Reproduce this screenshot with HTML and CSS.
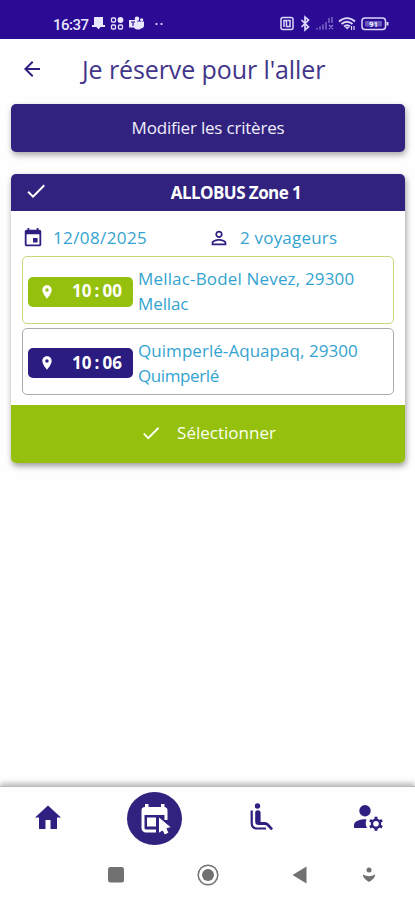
FILE: index.html
```html
<!DOCTYPE html>
<html lang="fr">
<head>
<meta charset="utf-8">
<meta name="viewport" content="width=device-width, initial-scale=1">
<title>Je réserve pour l'aller</title>
<link rel="stylesheet" href="styles.css">
</head>
<body>
<div class="status">
  <span class="clock">16:37</span>
  <svg class="st-left" width="76" height="18" viewBox="0 0 76 18">
    <path d="M4 2h9v8h2v2h-4.500l-2 2.500-2-2.500H2v-2h2z"/>
    <g fill="none" stroke="#e4e0ff" stroke-width="1.300"><rect x="21.500" y="3" width="4" height="4" rx="1"/><rect x="21.500" y="10" width="4" height="4" rx="1"/><rect x="28.500" y="10" width="4" height="4" rx="1"/></g>
    <circle cx="30.500" cy="5" r="2.900"/>
    <circle cx="47" cy="3.800" r="2.300"/><circle cx="51.700" cy="4.800" r="1.600"/>
    <path d="M39 5h8v1.500h7v4c0 2-1.500 3-3 3-1 1.500-6 1.500-7-1H39z"/>
    <path d="M41 7h4M43 7v4" stroke="#2b0b93" stroke-width="1.100"/>
    <circle cx="66.500" cy="9" r="1.100"/><circle cx="71.500" cy="9" r="1.100"/>
  </svg>
  <svg class="st-right" width="112" height="18" viewBox="0 0 112 18">
    <g fill="none" stroke="#dcd8fa" stroke-width="1.500">
    <rect x="2" y="2.500" width="12" height="12" rx="2"/>
    <path d="M5 12V5.500h2.500v6H11V5.500H8.500"/>
    <path d="m22.500 5 7 7-3.500 3V2l3.500 3-7 7" stroke-width="1.700"/>
    <path d="M38 14.500v-1.500M41 14.500v-3M44 14.500v-5M47 14.500V7M50 8V3m3 5V2m-3 8 4 4m0-4-4 4" stroke="#8a7bd0" stroke-width="1.300"/>
    <path d="M60 6.500c5-4.500 11-4.500 16 0M62.500 9c3.500-3 7.500-3 11 0M65 11.500c2-1.700 4-1.700 6 0" stroke-width="1.900"/>
    <path d="m66 12 2.200 2.500 2.200-2.500z" fill="#dcd8fa" stroke="none"/><path d="M72.500 11v4m2.500-4v4" stroke-width="1.200"/>
    <rect x="83" y="3" width="23.500" height="11.500" rx="3"/>
    <path d="M108.500 7v3.500" stroke-width="2"/>
    <rect x="86" y="6" width="17" height="5.500" rx="1" fill="#6a5cc0" stroke="none"/>
    </g>
    <text x="94.500" y="12" text-anchor="middle" class="battery">91</text>
  </svg>
</div>
<header class="top">
  <svg class="back" width="24" height="24" viewBox="0 0 24 24"><path d="M20 11H7.830l5.590-5.590L12 4l-8 8 8 8 1.410-1.410L7.830 13H20v-2z"/></svg>
  <h1>Je réserve pour l'aller</h1>
</header>
<main>
  <button class="criteria"><span>Modifier les critères</span></button>
  <section class="card">
    <div class="card-head">
      <svg width="24" height="24" viewBox="0 0 24 24"><path d="M9 16.170L4.830 12l-1.420 1.410L9 19 21 7l-1.410-1.410z"/></svg>
      <h2>ALLOBUS Zone 1</h2>
    </div>
    <div class="card-body">
      <div class="meta">
        <div class="meta-item">
          <svg width="22" height="22" viewBox="0 0 24 24"><path d="M17 12h-5v5h5v-5zM16 1v2H8V1H6v2H5c-1.110 0-1.990.9-1.990 2L3 19c0 1.100.890 2 2 2h14c1.100 0 2-.9 2-2V5c0-1.100-.9-2-2-2h-1V1h-2zm3 18H5V8h14v11z"/></svg>
          <span class="date">12/08/2025</span>
        </div>
        <div class="meta-item">
          <svg width="22" height="22" viewBox="0 0 24 24"><path d="M12 5.900c1.160 0 2.100.940 2.100 2.100s-.940 2.100-2.100 2.100S9.900 9.160 9.900 8s.940-2.100 2.100-2.100m0 9c2.970 0 6.100 1.460 6.100 2.100v1.100H5.900V17c0-.640 3.130-2.100 6.100-2.100M12 4C9.790 4 8 5.790 8 8s1.790 4 4 4 4-1.790 4-4-1.790-4-4-4zm0 9c-2.670 0-8 1.340-8 4v3h16v-3c0-2.660-5.330-4-8-4z"/></svg>
          <span class="people">2 voyageurs</span>
        </div>
      </div>
      <div class="stop from">
        <div class="chip">
          <svg width="16" height="16" viewBox="0 0 24 24"><path d="M12 2C8.130 2 5 5.130 5 9c0 5.250 7 13 7 13s7-7.750 7-13c0-3.870-3.130-7-7-7zm0 9.500c-1.380 0-2.500-1.120-2.500-2.500s1.120-2.500 2.500-2.500 2.500 1.120 2.500 2.500-1.120 2.500-2.500 2.500z"/></svg>
          <span class="time">10<i>:</i>00</span>
        </div>
        <p><span class="l1">Mellac-Bodel Nevez, 29300</span><br><span class="l2">Mellac</span></p>
      </div>
      <div class="stop to">
        <div class="chip">
          <svg width="16" height="16" viewBox="0 0 24 24"><path d="M12 2C8.130 2 5 5.130 5 9c0 5.250 7 13 7 13s7-7.750 7-13c0-3.870-3.130-7-7-7zm0 9.500c-1.380 0-2.500-1.120-2.500-2.500s1.120-2.500 2.500-2.500 2.500 1.120 2.500 2.500-1.120 2.500-2.500 2.500z"/></svg>
          <span class="time">10<i>:</i>06</span>
        </div>
        <p><span class="l1">Quimperlé-Aquapaq, 29300</span><br><span class="l2">Quimperlé</span></p>
      </div>
    </div>
    <button class="select">
      <svg width="22" height="22" viewBox="0 0 24 24"><path d="M9 16.170L4.830 12l-1.420 1.410L9 19 21 7l-1.410-1.410z"/></svg>
      <span>Sélectionner</span>
    </button>
  </section>
</main>
<nav class="tabs">
  <a class="tab"><svg width="32" height="32" viewBox="0 0 32 32"><path d="M16 4.500 29 16.500h-4V28h-6.500v-9h-5v9H7V16.500H3z"/></svg></a>
  <a class="tab"><span class="bubble"><svg width="36" height="36" viewBox="0 0 36 36">
    <path fill="none" stroke="#fff" stroke-width="3" stroke-linejoin="round" d="M19 30H9a3 3 0 0 1-3-3V9.500a2 2 0 0 1 2-2h19a2 2 0 0 1 2 2V19"/>
    <path fill="#fff" d="M8 3h3.500v4.500H24V3h3.500v4.500H30V14H5V7.500h3zM10 16.500h9v9h-9z"/>
    <path fill="#fff" stroke="#30227e" stroke-width="1" d="M21.500 15.500v17l4-2.500 2 4 4.500-2-2-4.500 4.500-1z"/>
  </svg></span></a>
  <a class="tab"><svg width="32" height="32" viewBox="0 0 32 32">
    <circle cx="12.500" cy="5" r="2.700"/>
    <path d="M10.200 12a2.700 2.700 0 0 1 5.400 0v9H20q2 0 3.500 1.500l4.500 5-1.800 1.700-4.700-4.700q-.5-.5-1.500-.5h-6.300q-3.500 0-3.500-3.500z"/>
    <path fill="none" stroke="#2e1f80" stroke-width="2.200" d="M6.700 9.500V22q0 5.500 5.500 5.500H21"/>
  </svg></a>
  <a class="tab"><svg width="32" height="32" viewBox="0 0 32 32">
    <circle cx="13" cy="9.800" r="5.700"/>
    <path d="M2 27v-3c0-3.800 5.500-5.800 12.500-5.800q-1.800 4.400.5 8.800z"/>
    <circle cx="24" cy="22.800" r="4" fill="none" stroke="#2e1f80" stroke-width="2.400"/>
    <path fill="none" stroke="#2e1f80" stroke-width="3" d="M24 18.800v-3m0 11v3M20.500 20.800l-2.600-1.500m9.600 5.500 2.600 1.500M20.500 24.800l-2.600 1.500m9.600-5.500 2.600-1.500"/>
  </svg></a>
</nav>
<footer class="sysnav">
  <svg width="24" height="24" viewBox="0 0 24 24"><rect x="4" y="4" width="16" height="15.500" rx="2.500"/></svg>
  <svg width="24" height="24" viewBox="0 0 24 24"><circle cx="12" cy="12" r="9.800" fill="none" stroke="#717171" stroke-width="1.500"/><circle cx="12" cy="12" r="6"/></svg>
  <svg width="24" height="24" viewBox="0 0 24 24"><path d="M18.500 3.500v17L4.500 12z"/></svg>
  <svg width="24" height="24" viewBox="0 0 24 24"><circle cx="12" cy="7" r="2.500"/><path d="M6 11.500q6 3.500 12 0v1.500q-1 3-6 6-5-3-6-6z"/></svg>
</footer>
</body>
</html>
```
FILE: styles.css
```css
* { box-sizing: border-box; }
body {
  margin: 0;
  height: 900px;
  display: flex;
  flex-direction: column;
  background: #fefefe;
  color: #2e1f80;
  font-family: "Open Sans", "Noto Sans", sans-serif;
  overflow: hidden;
}
svg { display: block; flex: none; fill: currentColor; }
h1, h2, p { margin: 0; font-weight: 400; white-space: nowrap; }
button { border: 0; padding: 0; font: inherit; color: #f1effc; }

.status {
  flex: none;
  height: 39px;
  padding: 10px 24px 0 53px;
  display: flex;
  align-items: center;
  background: #2b0b93;
  color: #e9e6ff;
}
.clock { font: 500 15px/18px Roboto, sans-serif; width: 37px; letter-spacing: -0.5px; }
.st-left { margin-top: -1px; }
.st-right { margin-left: auto; margin-top: -1px; }
.battery { font: 700 8px Roboto, sans-serif; fill: #f1efff; }

.top { flex: none; height: 65px; display: flex; align-items: center; padding: 0 0 5px 20px; }
.back { width: 24px; height: 24px; }
h1 { margin-left: 38px; font-size: 25px; line-height: 34px; letter-spacing: -0.1px; color: #42358a; }

main { flex: 1; padding: 0 10px 0 11px; }
.criteria {
  width: 100%;
  height: 48px;
  display: flex;
  align-items: center;
  justify-content: center;
  padding-bottom: 2px;
  border-radius: 5px;
  background: #30227e;
  font-size: 17px;
  letter-spacing: -0.2px;
  box-shadow: 1px 3px 6px rgba(0, 0, 0, .35);
}
.card {
  margin-top: 22px;
  border-radius: 5px;
  overflow: hidden;
  background: #fff;
  box-shadow: 1px 3px 6px rgba(0, 0, 0, .4);
}
.card-head {
  height: 37px;
  display: grid;
  grid-template-columns: 24px 1fr;
  align-items: center;
  padding: 0 0 0 13px;
  background: #30227e;
  color: #fff;
}
.card-head svg { margin-top: -3px; }
h2 { padding-left: 19px; text-align: center; font-size: 17px; font-weight: 700; line-height: 24px; letter-spacing: -0.55px; }
.card-body { height: 194px; padding: 14px 11px 0; }
.meta { display: grid; grid-template-columns: 186px 1fr; height: 31px; }
.meta-item { display: flex; align-items: center; height: 26px; gap: 9px; color: #2e1f80; }
.meta-item span { color: #33a3cf; font-size: 17px; line-height: 24px; }
.date { letter-spacing: 0.4px; }
.people { padding-left: 1px; letter-spacing: 0.2px; }
.stop {
  display: flex;
  align-items: center;
  height: 68px;
  padding-left: 5px;
  border: 1px solid #c8d878;
  border-radius: 5px;
}
.stop.to { margin-top: 4px; border-color: #aaa; height: 67px; }
.chip {
  flex: none;
  width: 105px;
  height: 30px;
  display: flex;
  align-items: center;
  padding: 0 11px;
  justify-content: space-between;
  border-radius: 5px;
  background: #95c00d;
  color: #fff;
  margin-top: 3px;
}
.to .chip { background: #2a1c80; }
.time { font-size: 17px; font-weight: 700; line-height: 24px; padding-bottom: 1px; }
.time i { display: inline-block; width: 11px; text-align: center; font-style: normal; }
.stop p { margin: 2px 0 0 5px; font-size: 17px; line-height: 25px; color: #33a3cf; }
.from .l1 { letter-spacing: 0.17px; }
.to .l1 { letter-spacing: 0.05px; }
.from .l2 { letter-spacing: -0.1px; }
.to .l2 { letter-spacing: -0.4px; }
.select {
  width: 100%;
  height: 58px;
  display: flex;
  align-items: center;
  justify-content: center;
  gap: 15px;
  padding-bottom: 3px;
  background: #95c00d;
  color: #fbfff0;
  font-size: 17px;
}

.tabs {
  flex: none;
  height: 64px;
  display: flex;
  justify-content: space-between;
  align-items: center;
  padding: 0 31px 0 32px;
  border-top: 1px solid #bbb;
  box-shadow: 0 -3px 5px rgba(0, 0, 0, .25);
}
.tab { width: 32px; display: flex; justify-content: center; }
.tab > svg { margin-top: -3px; }
.bubble {
  flex: none;
  width: 55px;
  height: 53px;
  display: grid;
  place-items: center;
  border-radius: 50%;
  background: #30227e;
}
.sysnav {
  flex: none;
  height: 50px;
  display: grid;
  grid-template-columns: 92px 92px 69px 24px;
  align-items: center;
  padding-left: 104px;
  background: #fefefe;
  color: #717171;
}
```
